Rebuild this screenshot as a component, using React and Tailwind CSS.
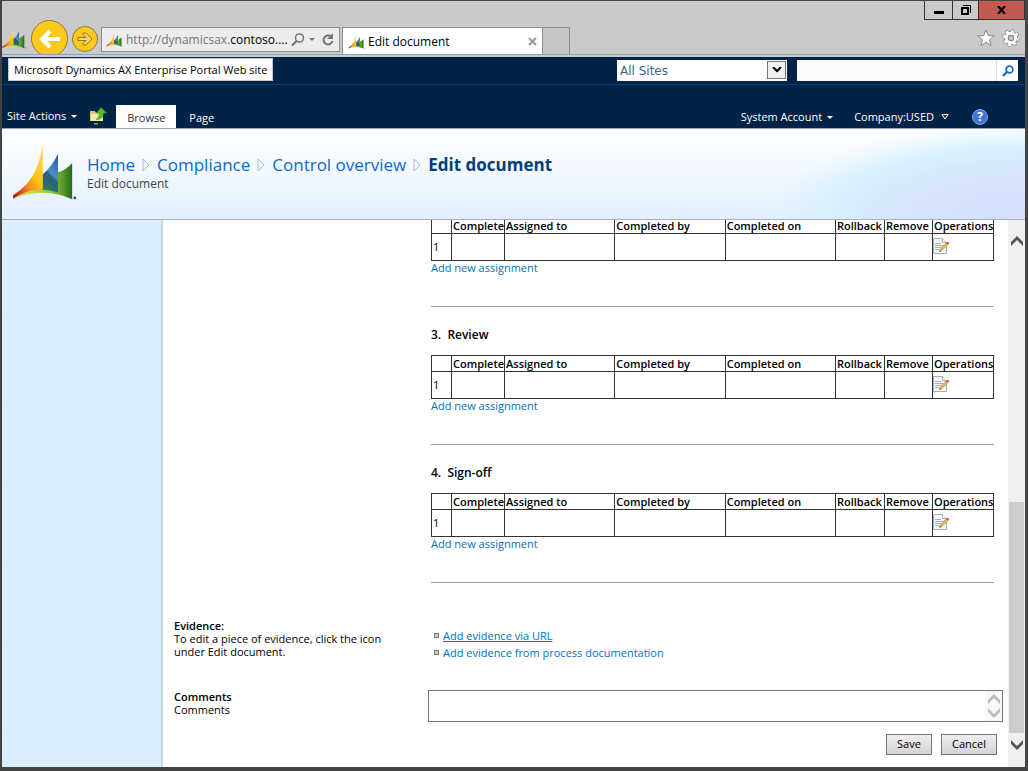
import React, { useState } from 'react';

const columns = [
    { label: '', width: 'w-[20px]' },
    { label: 'Complete', width: 'w-[53px]' },
    { label: 'Assigned to', width: '' },
    { label: 'Completed by', width: '' },
    { label: 'Completed on', width: '' },
    { label: 'Rollback', width: 'w-[49px]' },
    { label: 'Remove', width: 'w-[48px]' },
    { label: 'Operations', width: 'w-[61px]' },
];

const SailLogo = ({ className }) => (
    <svg className={className} viewBox="0 0 190 175" aria-hidden="true">
        <defs>
            <linearGradient id="sailYellow" x1="0.9" y1="0" x2="0.1" y2="1">
                <stop offset="0" stopColor="#ffe25a" />
                <stop offset="0.45" stopColor="#ffc20e" />
                <stop offset="0.7" stopColor="#f58220" />
                <stop offset="1" stopColor="#a81c10" />
            </linearGradient>
            <linearGradient id="sailBlue" x1="0.8" y1="0" x2="0.4" y2="1">
                <stop offset="0" stopColor="#2a5ca0" />
                <stop offset="0.5" stopColor="#4a8fd0" />
                <stop offset="0.6" stopColor="#26607c" />
                <stop offset="1" stopColor="#2f7468" />
            </linearGradient>
            <linearGradient id="sailGreen" x1="0.3" y1="0" x2="1" y2="0">
                <stop offset="0" stopColor="#c9dc4a" />
                <stop offset="0.55" stopColor="#8fbf30" />
                <stop offset="0.8" stopColor="#55961f" />
                <stop offset="1" stopColor="#1f6a26" />
            </linearGradient>
        </defs>
        <path fill="url(#sailGreen)" d="M135 90Q160 82 177 62V170Q100 132 2 168Q45 140 90 136Q112 138 135 150Z" />
        <path fill="url(#sailBlue)" d="M88 98Q118 72 135 35V150Q112 142 88 141Z" />
        <path fill="url(#sailYellow)" d="M2 158Q50 126 68 85Q84 50 90 3V140Q45 140 2 168Z" />
        <circle cx="185" cy="166" r="4" fill="#444" />
    </svg>
);

const Caret = ({ className = '' }) => (
    <svg className={`h-[3px] w-[6px] ${className}`} viewBox="0 0 6 3" fill="currentColor" aria-hidden="true">
        <path d="M0 0h6L3 3z" />
    </svg>
);

const Chevron = ({ up, className }) => (
    <svg className={className} viewBox="0 0 12 10" fill="currentColor" aria-hidden="true">
        {up ? <path d="M6 0l6 6v4L6 4 0 10V6z" /> : <path d="M6 10l6-6V0L6 6 0 0v4z" />}
    </svg>
);

const CrumbArrow = () => (
    <svg className="h-[14px] w-[8px]" viewBox="0 0 8 14" fill="#f4f9ff" stroke="#a3c0e4" aria-hidden="true">
        <path d="M1 1v12l6-6z" />
    </svg>
);

const EditIcon = () => (
    <svg className="h-[17px] w-[17px]" viewBox="0 0 17 17" aria-hidden="true">
        <path fill="#f6f7fa" stroke="#a9adb5" d="M.5.5h9l4 4v11H.5z" />
        <path fill="#fff" stroke="#a9adb5" d="M9.5.5v4h4" />
        <path stroke="#a3b4cc" d="M2 5.500h6M2 7.500h8M2 9.500h6M2 11.500h4" />
        <path fill="#f0c04a" stroke="#9a7a38" strokeWidth=".6" d="M6.500 13.300l1-2.600L13 5l1.700 1.700-5.700 5.700z" />
        <path fill="#e0566a" d="M13 5l1.300-1.200q2 .2 2 2L14.700 6.800z" />
        <path fill="#333" d="M6.300 13.800l.5-1.500 1 1z" />
    </svg>
);

const BrowserChrome = () => (
    <div className="flex h-[53px] shrink-0 justify-between overflow-hidden bg-[#cacaca]">
        <div className="flex items-start pt-[26px] text-[12px]">
            <SailLogo className="h-[22px] w-[24px]" />
            <button aria-label="Back" className="-mt-[7px] ml-[5px] flex h-[37px] w-[37px] items-center justify-center rounded-full border border-[#8b7a4a] bg-[#fbc91b]">
                <svg className="h-[18px] w-[22px]" viewBox="0 0 22 18" fill="none" stroke="#fff" strokeWidth="4" aria-hidden="true">
                    <path d="M21 9H4M11 1L3 9l8 8" />
                </svg>
            </button>
            <button aria-label="Forward" className="-mt-px ml-[4px] flex h-[26px] w-[26px] items-center justify-center rounded-full border border-[#8b7a4a] bg-[#fbc91b]">
                <svg className="h-[14px] w-[16px]" viewBox="0 0 16 14" fill="#fbd75a" stroke="#8b7432" aria-hidden="true">
                    <path d="M1 5.500h8L6 2.500V1h3l6 6-6 6H6v-1.500l3-3H1z" />
                </svg>
            </button>
            <div className="ml-[3px] flex h-[25px] w-[239px] items-center border border-[#8e8e8e] bg-[#ececec] pl-[4px] pr-[5px] text-[#777]">
                <SailLogo className="h-[15px] w-[17px] shrink-0" />
                <span className="ml-[3px] flex-1 whitespace-nowrap">
                    http://dynamicsax.<span className="text-black">contoso....</span>
                </span>
                <svg className="h-[14px] w-[14px]" viewBox="0 0 14 14" fill="none" stroke="currentColor" strokeWidth="1.600" aria-hidden="true">
                    <circle cx="8.500" cy="5" r="4" />
                    <path strokeWidth="2.200" d="M5.500 8L1 12.500" />
                </svg>
                <Caret className="ml-[4px]" />
                <svg className="ml-[7px] h-[13px] w-[12px]" viewBox="0 0 12 13" fill="none" stroke="currentColor" strokeWidth="2" aria-hidden="true">
                    <path d="M10.500 8A4.500 4.500 0 1 1 9 3.500" />
                    <path fill="currentColor" stroke="none" d="M11 0v6H5z" />
                </svg>
            </div>
            <div className="ml-[2px] flex h-[27px] w-[201px] items-center border border-b-0 border-[#8e8e8e] bg-white px-[5px] pt-px text-black">
                <SailLogo className="h-[15px] w-[17px]" />
                <span className="ml-[3px] flex-1">Edit document</span>
                <button aria-label="Close tab">
                    <svg className="h-[9px] w-[9px]" viewBox="0 0 9 9" stroke="#999" strokeWidth="2" aria-hidden="true">
                        <path d="M1 1l7 7M8 1L1 8" />
                    </svg>
                </button>
            </div>
            <button aria-label="New tab" className="h-[27px] w-[27px] border border-b-0 border-l-0 border-[#8e8e8e] bg-[#c6c6c6]" />
        </div>
        <div className="flex flex-col items-end">
            <div className="flex h-[19px] border border-t-0 border-[#333]">
                <button aria-label="Minimize" className="flex w-[28px] items-center justify-center border-r border-[#333]">
                    <span className="mt-[4px] h-[3px] w-[10px] bg-black" />
                </button>
                <button aria-label="Restore" className="flex w-[26px] items-center justify-center border-r border-[#333]">
                    <svg className="h-[10px] w-[10px]" viewBox="0 0 10 10" fill="none" stroke="#000" aria-hidden="true">
                        <path strokeWidth="2" d="M1 3h6v6H1z" />
                        <path d="M2 .5h7.500V8" />
                    </svg>
                </button>
                <button aria-label="Close" className="flex w-[45px] items-center justify-center bg-[#c4594f]">
                    <svg className="h-[8px] w-[9px]" viewBox="0 0 9 8" stroke="#000" strokeWidth="2.200" aria-hidden="true">
                        <path d="M1 0l7 8M8 0L1 8" />
                    </svg>
                </button>
            </div>
            <div className="mr-[5px] mt-[9px] flex gap-[7px]">
                <svg className="h-[18px] w-[18px]" viewBox="0 0 18 18" fill="#fff" stroke="#8a8a8a" aria-hidden="true">
                    <path d="M9 1l2.200 5.600 6 .3-4.700 3.800 1.600 5.900L9 13.300l-5.100 3.300 1.600-5.900L.8 6.900l6-.3z" />
                </svg>
                <svg className="h-[18px] w-[18px]" viewBox="0 0 18 18" aria-hidden="true">
                    <circle cx="9" cy="9" r="7" fill="none" stroke="#858585" strokeWidth="3.400" strokeDasharray="3 2.500" />
                    <circle cx="9" cy="9" r="4.700" fill="none" stroke="#858585" strokeWidth="5" />
                    <circle cx="9" cy="9" r="6.800" fill="none" stroke="#fff" strokeWidth="2.400" strokeDasharray="2.600 2.740" />
                    <circle cx="9" cy="9" r="4.700" fill="none" stroke="#fff" strokeWidth="3" />
                    <circle cx="9" cy="9" r="2.600" fill="#cacaca" stroke="#858585" />
                </svg>
            </div>
        </div>
    </div>
);

const SiteBar = () => (
    <div className="flex h-[28px] shrink-0 items-start justify-between border-b border-[#00427f] bg-[#002347] pl-[6px] pr-[7px] pt-px">
        <a href="#" className="flex h-[23px] items-center border border-[#c8c8c8] bg-white px-[5px] pt-px text-black">
            Microsoft Dynamics AX Enterprise Portal Web site
        </a>
        <div className="flex gap-[10px] pt-[2px]">
            <div className="relative w-[170px]">
                <select aria-label="Search scope" className="h-[21px] w-full appearance-none bg-white pl-[3px] font-['DejaVu_Sans',sans-serif] text-[12px] text-[#44618a]">
                    <option>All Sites</option>
                </select>
                <span className="pointer-events-none absolute right-px top-px flex h-[18px] w-[19px] items-center justify-center border border-[#777] bg-[#f0f0f0]">
                    <svg className="h-[6px] w-[10px]" viewBox="0 0 10 6" fill="none" stroke="#000" strokeWidth="2" aria-hidden="true">
                        <path d="M1 0l4 4 4-4" />
                    </svg>
                </span>
            </div>
            <div className="flex h-[21px] w-[221px] bg-[#fcfcfc]">
                <input type="text" aria-label="Search" className="min-w-0 flex-1 border-r border-[#ddd] px-1 outline-none" />
                <button aria-label="Go" className="flex w-[21px] items-center justify-center bg-white">
                    <svg className="h-[12px] w-[12px]" viewBox="0 0 12 12" fill="none" stroke="#0d72c6" strokeWidth="1.800" aria-hidden="true">
                        <circle cx="7.500" cy="4.500" r="3.400" />
                        <path strokeWidth="2.400" d="M5 7l-4 4" />
                    </svg>
                </button>
            </div>
        </div>
    </div>
);

const Ribbon = () => (
    <div className="flex h-[43px] shrink-0 items-end justify-between bg-[#002347] text-white">
        <div className="flex items-end">
            <button className="flex h-[24px] items-center gap-[5px] pl-[5px]">
                Site Actions
                <Caret />
            </button>
            <button aria-label="Navigate up" className="mb-[3px] ml-[13px]">
                <svg className="h-[18px] w-[17px]" viewBox="0 0 17 18" aria-hidden="true">
                    <path fill="#e8c36a" d="M0 4h5l1 1.500h7V14H0z" />
                    <path fill="#fbe7a8" d="M1 7h12v7H1z" />
                    <path fill="#4fc234" stroke="#2b8a1d" strokeWidth=".6" d="M11 .5L16.500 6H13.500q0 6-7 6.500Q9.500 10 9.500 6H6.500z" />
                    <path fill="#3fd22c" d="M4 16h4v1.500H4z" />
                </svg>
            </button>
            <button className="ml-[9px] flex h-[23px] w-[60px] items-center justify-center bg-white pt-[4px] text-[#333]">Browse</button>
            <button className="ml-[13px] flex h-[23px] items-center pt-[4px]">Page</button>
        </div>
        <div className="flex h-[24px] items-center pr-[37px] pt-[2px]">
            <button className="flex items-center gap-[5px]">
                System Account
                <Caret />
            </button>
            <button className="ml-[21px] flex items-center gap-[7px]">
                Company:USED
                <svg className="h-[6px] w-[8px]" viewBox="0 0 8 6" stroke="#fff" fill="#333" aria-hidden="true">
                    <path d="M.8.500h6.400L4 5z" />
                </svg>
            </button>
            <button aria-label="Help" className="ml-[23px] flex h-[16px] w-[16px] items-center justify-center rounded-full border border-[#7ba3e8] bg-[#3f78d4] text-[12px] font-bold">?</button>
        </div>
    </div>
);

const PageHeader = () => (
    <div className="flex h-[92px] shrink-0 items-start border-b border-[#a8adb3] border-t border-t-[#93a5bb] bg-[radial-gradient(ellipse_260px_95px_at_100%_100%,#d4defd_0%,#d6e4fc_45%,#d9f1fe_75%,transparent_100%),linear-gradient(to_bottom,#ffffff,#e2f0fd)] pl-[10px] pt-[13px]">
        <SailLogo className="h-[59px] w-[65px]" />
        <div className="ml-[10px] mt-[11px]">
            <nav className="flex items-center gap-[7px] text-[17px] leading-[24px] text-[#0a6bce]">
                <a href="#">Home</a>
                <CrumbArrow />
                <a href="#">Compliance</a>
                <CrumbArrow />
                <a href="#">Control overview</a>
                <CrumbArrow />
                <span className="font-bold text-[#003f7d]">Edit document</span>
            </nav>
            <p className="text-[12px] leading-[13px] text-[#444]">Edit document</p>
        </div>
    </div>
);

const AssignmentStep = ({ title, clipped }) => (
    <section>
        {title && <h2 className="mb-[10px] mt-[18px] whitespace-pre text-[12px] leading-[20px] font-semibold">{title}</h2>}
        <table className="w-full table-fixed border-collapse text-left">
            <thead>
                <tr className={clipped ? 'h-[13px]' : 'h-[16px]'}>
                    {columns.map(({ label, width }) => (
                        <th
                            key={label}
                            className={`${width} border border-[#333] p-0 pl-px leading-[12px] font-semibold whitespace-nowrap ${clipped ? 'border-t-0' : 'pt-px'}`}
                        >
                            {label}
                        </th>
                    ))}
                </tr>
            </thead>
            <tbody>
                <tr className="h-[27px]">
                    {columns.map(({ label }) => (
                        <td key={label} className="border border-[#333] p-0 leading-[13px]">
                            {label === '' && <span className="pl-px">1</span>}
                            {label === 'Operations' && (
                                <button aria-label="Edit assignment" className="block">
                                    <EditIcon />
                                </button>
                            )}
                        </td>
                    ))}
                </tr>
            </tbody>
        </table>
        <a href="#" className="block leading-[14px] text-[#0072bc]">Add new assignment</a>
        <hr className="mt-[31px] border-[#a0a0a0]" />
    </section>
);

const App = () => {
    const [comments, setComments] = useState('');

    return (
        <div className="flex h-screen flex-col overflow-hidden border-b-4 border-l-2 border-r-[3px] border-t border-[#444] bg-white font-['Open_Sans','Noto_Sans',sans-serif] text-[11px] text-black">
            <BrowserChrome />
            <div className="h-[3px] shrink-0 border-t border-[#8fa3bd] bg-[#c8ccd0]" />
            <SiteBar />
            <Ribbon />
            <PageHeader />

            <div className="flex min-h-0 flex-1">
                <aside className="w-[161px] shrink-0 border-r-2 border-[#c3d6ea] bg-[#dcedfe] bg-[linear-gradient(transparent_16px,#e1f1ff_16px,#e1f1ff_17px,transparent_17px)] bg-[length:126px_82px] bg-repeat-y" />

                <main className="min-w-0 flex-1 pl-[11px] pr-[5px]">
                    <div className="ml-[257px] mr-[9px]">
                        <AssignmentStep clipped />
                        <AssignmentStep title="3.  Review" />
                        <AssignmentStep title="4.  Sign-off" />
                    </div>

                    <div className="mt-[36px] grid grid-cols-[254px_1fr]">
                        <div className="w-[230px] leading-[13px]">
                            <h3 className="font-semibold">Evidence:</h3>
                            <p>To edit a piece of evidence, click the icon under Edit document.</p>
                        </div>
                        <ul className="pl-[6px] pt-[8px] leading-[17px] text-[#0072bc]">
                            <li className="flex items-center gap-[4px]">
                                <span className="h-[5px] w-[5px] border border-[#777] bg-[#ccc]" />
                                <a href="#" className="underline">Add evidence via URL</a>
                            </li>
                            <li className="flex items-center gap-[4px]">
                                <span className="h-[5px] w-[5px] border border-[#777] bg-[#ccc]" />
                                <a href="#">Add evidence from process documentation</a>
                            </li>
                        </ul>
                    </div>

                    <div className="mt-[29px] grid grid-cols-[254px_1fr]">
                        <label htmlFor="comments" className="leading-[13px]">
                            <span className="block font-semibold">Comments</span>
                            Comments
                        </label>
                        <div className="flex h-[32px] border border-[#777]">
                            <textarea
                                id="comments"
                                value={comments}
                                onChange={(e) => setComments(e.target.value)}
                                className="min-w-0 flex-1 resize-none overflow-hidden px-1 outline-none"
                            />
                            <div className="flex w-[17px] flex-col items-center justify-between bg-[#f8f8f8] py-[3px] text-[#bbb]">
                                <Chevron up className="h-[10px] w-[12px]" />
                                <Chevron className="h-[10px] w-[12px]" />
                            </div>
                        </div>
                    </div>

                    <div className="mr-[6px] mt-[12px] flex justify-end gap-[9px]">
                        <button className="h-[21px] w-[46px] border border-[#777] bg-linear-to-b from-[#eee] to-[#d4d4d4]">Save</button>
                        <button className="h-[21px] w-[56px] border border-[#777] bg-linear-to-b from-[#eee] to-[#d4d4d4]">Cancel</button>
                    </div>
                </main>

                <div className="flex w-[17px] shrink-0 flex-col items-center bg-[#f0f0f0] pb-[17px] pt-[16px] text-[#555]">
                    <Chevron up className="h-[10px] w-[12px]" />
                    <div className="flex-1" />
                    <div className="mb-[7px] h-[45%] w-[15px] bg-[#cdcdcd]" />
                    <Chevron className="h-[10px] w-[12px]" />
                </div>
            </div>
        </div>
    );
};

export default App;
